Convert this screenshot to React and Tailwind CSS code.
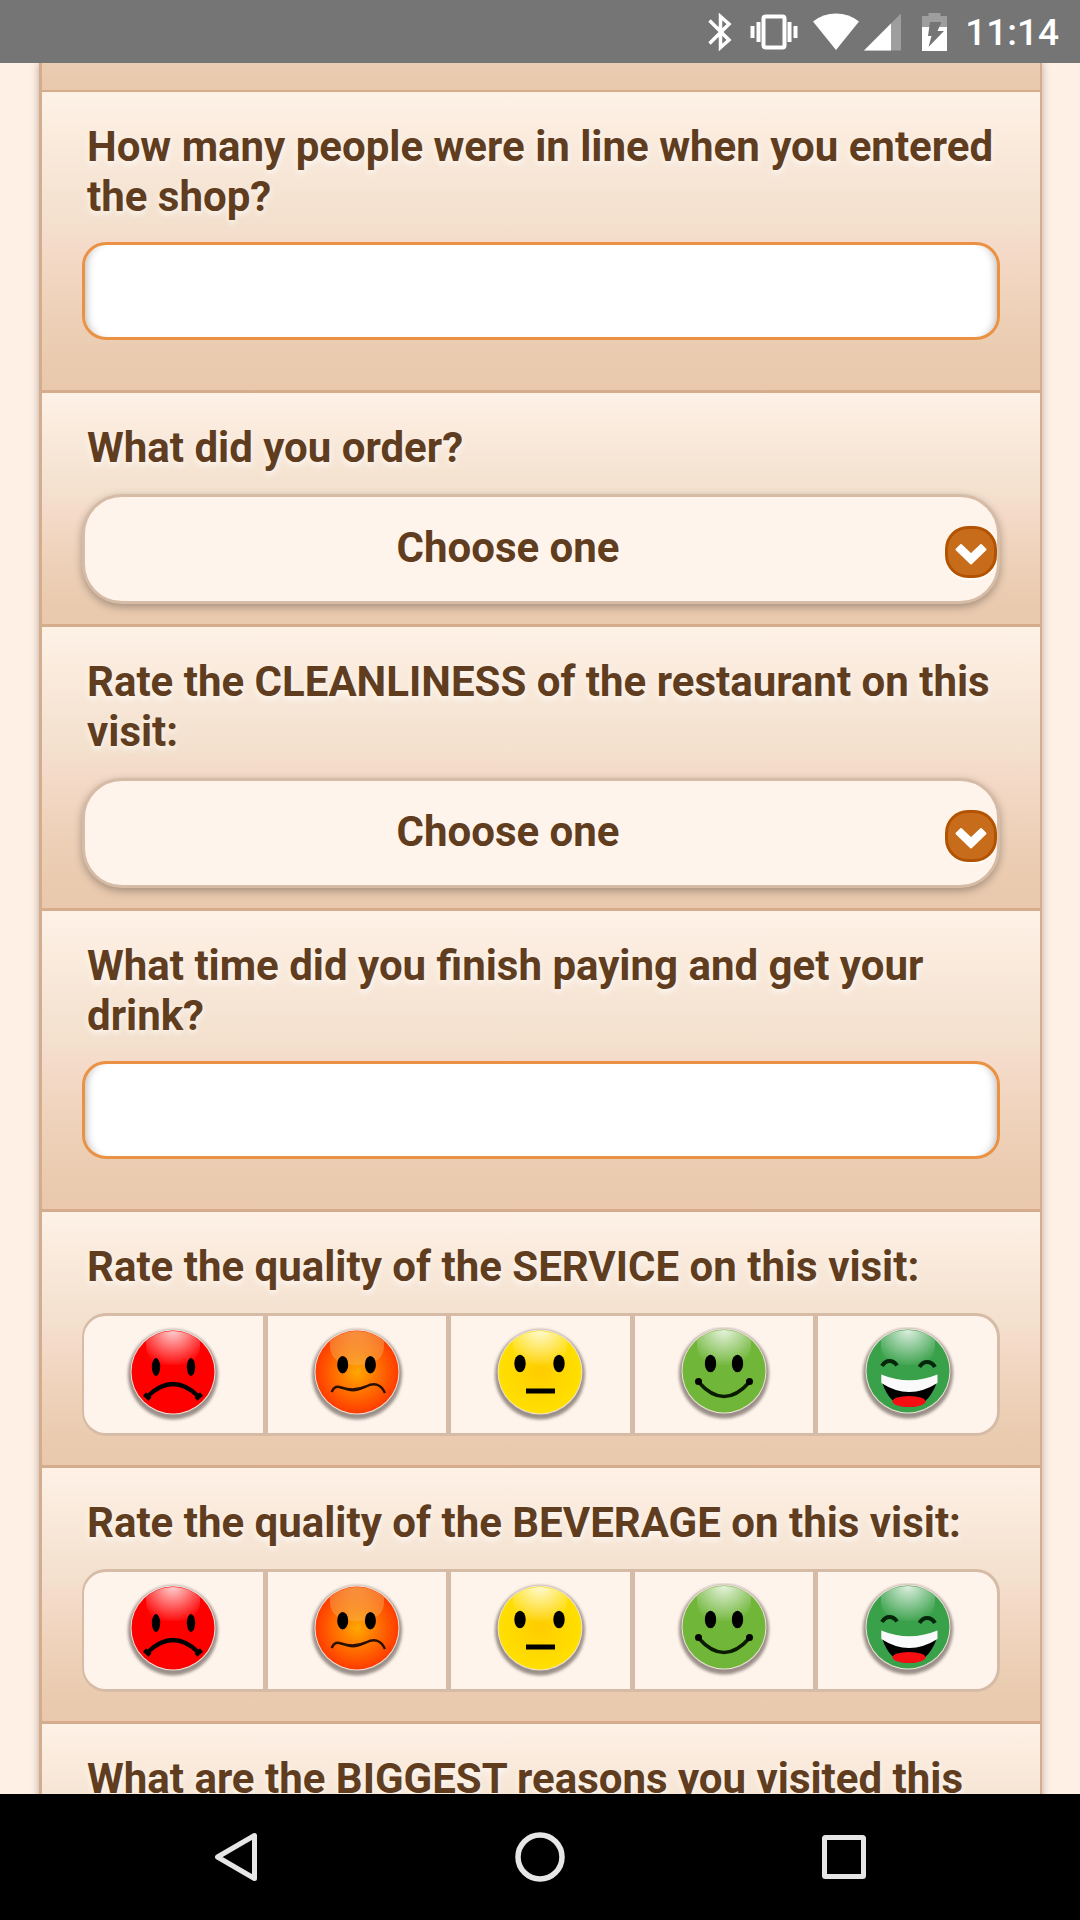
import React, { useId, useState } from 'react';

const QUESTION_TEXT =
  'block px-[5px] text-[42px] leading-[50px] font-bold text-[#5f3d1e] [text-shadow:0_3px_6px_rgba(255,255,255,0.8)]';

const faces = [
  { id: 'terrible', label: 'Terrible', inner: '#ff0000', outer: '#ff0000', cy: 45 },
  { id: 'poor', label: 'Poor', inner: '#ffa800', outer: '#ff3c00', cy: 45 },
  { id: 'average', label: 'Average', inner: '#ffcc00', outer: '#ffe000', cy: 45 },
  { id: 'good', label: 'Good', inner: '#70b639', outer: '#70b639', cy: 44 },
  { id: 'excellent', label: 'Excellent', inner: '#3aa14b', outer: '#3aa14b', cy: 44 },
];

const features = {
  terrible: (
    <>
      <ellipse cx="31" cy="40" rx="4.2" ry="9" />
      <ellipse cx="66" cy="40" rx="4.2" ry="9" />
      <path
        d="M23 69 Q48 45 73 69 M19.5 67 L25 72 M71 72 L76.5 67"
        fill="none"
        stroke="#000"
        strokeWidth="4.5"
      />
    </>
  ),
  poor: (
    <>
      <ellipse cx="33.7" cy="37.7" rx="5.5" ry="8.7" />
      <ellipse cx="61.4" cy="37.7" rx="5.5" ry="8.7" />
      <path
        d="M22.7 65 Q25 58 32 60.5 Q45 65 57 59.5 Q70 53 76 66"
        fill="none"
        stroke="#2a1000"
        strokeWidth="2.5"
      />
      <path d="M32 60.5 Q46 64 58 59 Q46 69 32 60.5Z" fill="#2a1000" />
    </>
  ),
  average: (
    <>
      <ellipse cx="28" cy="36.5" rx="5.7" ry="8.7" />
      <ellipse cx="67" cy="36.5" rx="5.7" ry="8.7" />
      <path d="M34 64 H63" fill="none" stroke="#000" strokeWidth="5" />
    </>
  ),
  good: (
    <>
      <ellipse cx="34.5" cy="36.5" rx="5.7" ry="8.7" />
      <ellipse cx="61.5" cy="36.5" rx="5.7" ry="8.7" />
      <path d="M22.5 55 Q48 84 73.5 55" fill="none" stroke="#0c1c02" strokeWidth="3.5" />
      <circle cx="22.5" cy="54.5" r="3.5" />
      <circle cx="73.5" cy="54.5" r="3.5" />
    </>
  ),
  excellent: (
    <>
      <path
        d="M22 39 Q25 34 29.5 34 Q34 34 37 38.5 M59.500 40 Q62.5 35 67 35 Q72 35 75 40"
        fill="none"
        stroke="#06260c"
        strokeWidth="4"
      />
      <path d="M22 55 Q49 74 77 55 Q68 80 49.5 80 Q30 80 22 55Z" />
      <ellipse cx="49" cy="74.5" rx="16.5" ry="5.5" fill="#f50f12" />
      <path d="M21.3 47.5 Q49 59 77.5 47.5 V56 Q49 74 21.3 56Z" fill="#fafafa" />
    </>
  ),
};

const Face = ({ face }) => {
  const uid = useId();
  const { cy } = face;
  // orange keeps a flat, darker highlight than the others
  const isFlat = face.id === 'poor';
  const gloss = isFlat ? '#f5b45a' : '#ffffff';

  return (
    <svg viewBox="0 0 96 96" className="h-24 w-24" aria-hidden="true">
      <defs>
        <radialGradient id={`${uid}-body`}>
          <stop offset="0%" stopColor={face.inner} />
          <stop offset="100%" stopColor={face.outer} />
        </radialGradient>
        <radialGradient id={`${uid}-gloss`} gradientUnits="userSpaceOnUse" cx="48" cy="2" r="36">
          <stop offset="0%" stopColor={gloss} stopOpacity={isFlat ? 0.7 : 0.85} />
          <stop offset="100%" stopColor={gloss} stopOpacity={isFlat ? 0.4 : 0.05} />
        </radialGradient>
        <clipPath id={`${uid}-clip`}>
          <circle cx="48" cy={cy} r="41" />
        </clipPath>
        <filter id={`${uid}-blur`} x="-20%" y="-20%" width="140%" height="140%">
          <feGaussianBlur stdDeviation="1.7" />
        </filter>
      </defs>
      <circle cx="48" cy={cy + 2.5} r="45" fill="#6f6560" opacity="0.7" filter={`url(#${uid}-blur)`} />
      <circle cx="48" cy={cy} r="42.5" fill="#f0e2d8" />
      <circle cx="48" cy={cy} r="41.5" fill={`url(#${uid}-body)`} />
      <path
        d="M21 -4 H75 V20 Q74 38 48 38 Q22 38 21 20Z"
        fill={`url(#${uid}-gloss)`}
        clipPath={`url(#${uid}-clip)`}
      />
      {features[face.id]}
    </svg>
  );
};

const Section = ({ children, className = '' }) => (
  <section
    className={`shrink-0 border-b-3 border-[#d6ad8c] bg-[linear-gradient(#fef1e6_0%,#f3e0cd_44%,#f5dbca_50%,#eccfb5_78%,#e9c8ac_100%)] px-10 pt-[30px] ${className}`}
  >
    {children}
  </section>
);

const TextQuestion = ({ label }) => {
  const id = useId();
  const [value, setValue] = useState('');

  return (
    <Section className="pb-[50px]">
      <label htmlFor={id} className={QUESTION_TEXT}>
        {label}
      </label>
      <input
        id={id}
        type="text"
        value={value}
        onChange={(e) => setValue(e.target.value)}
        className="mt-5 block h-[98px] w-full rounded-[24px] border-3 border-[#ea9143] bg-white px-5 text-[42px] text-[#5f3d1e] shadow-[inset_9px_0_9px_-8px_rgba(0,0,0,0.3),inset_-9px_0_9px_-8px_rgba(0,0,0,0.3)] outline-none"
      />
    </Section>
  );
};

const SelectQuestion = ({ label, options }) => {
  const id = useId();
  const [value, setValue] = useState('');

  return (
    <Section className="pb-5">
      <label htmlFor={id} className={QUESTION_TEXT}>
        {label}
      </label>
      <div className="relative mt-[21px]">
        <select
          id={id}
          value={value}
          onChange={(e) => setValue(e.target.value)}
          className="block h-[110px] w-full appearance-none rounded-[40px] border-3 border-[#d6bca6] bg-[#fff4eb] pr-[82px] pb-1 pl-4 text-[42px] font-bold text-[#5f3d1e] shadow-[0_3px_8px_rgba(0,0,0,0.3)] outline-none [text-align-last:center]"
        >
          <option value="">Choose one</option>
          {options.map((option) => (
            <option key={option}>{option}</option>
          ))}
        </select>
        <span className="pointer-events-none absolute top-8 right-[3px] flex h-[52px] w-[52px] items-center justify-center rounded-[23px] border-3 border-[#b35300] bg-[#c66c1b] pt-1 shadow-[0_2px_2px_rgba(255,255,255,0.8)]">
          <svg viewBox="0 0 32 22" className="h-[22px] w-8" fill="#fff" stroke="#fff" strokeWidth="2">
            <path d="M6 2 L16 11.500 L26 2 L30.500 6.500 L16 20.500 L1.500 6.500Z" strokeLinejoin="round" />
          </svg>
        </span>
      </div>
    </Section>
  );
};

const FaceQuestion = ({ label }) => {
  const name = useId();
  const [value, setValue] = useState('');

  return (
    <Section className="pb-[29px]">
      <fieldset className="min-w-0">
        <legend className={QUESTION_TEXT}>{label}</legend>
        <div className="mt-[21px] grid grid-cols-5">
          {faces.map((face) => (
            <label
              key={face.id}
              className="flex h-[123px] cursor-pointer items-center justify-center border-y-3 border-r-3 border-l-2 border-[#d6bca6] bg-[#fff4eb] first:rounded-l-[24px] last:rounded-r-[24px] has-checked:bg-[#f6c99a]"
            >
              <input
                type="radio"
                name={name}
                value={face.id}
                aria-label={face.label}
                checked={value === face.id}
                onChange={() => setValue(face.id)}
                className="sr-only"
              />
              <Face face={face} />
            </label>
          ))}
        </div>
      </fieldset>
    </Section>
  );
};

const StatusBar = () => (
  <header className="flex h-[63px] shrink-0 items-center justify-end bg-[#757575] pr-[21px] text-white">
    {/* Bluetooth */}
    <svg viewBox="0 0 24 38" className="mr-[18px] h-[38px] w-6" fill="none" stroke="#fff" strokeWidth="3.5">
      <path d="M1.5 7.5 L21 27 L12.5 34.5 V3.5 L21 11 L1.5 30.500" />
    </svg>
    {/* Vibrate */}
    <svg viewBox="0 0 48 38" className="mr-[15px] h-[38px] w-12" fill="#fff">
      <rect x="13.5" y="3.5" width="21" height="31" rx="2" fill="none" stroke="#fff" strokeWidth="4" />
      <rect x="0.5" y="13" width="4" height="12" />
      <rect x="6.5" y="9" width="4" height="20" />
      <rect x="37.5" y="9" width="4" height="20" />
      <rect x="43.5" y="13" width="4" height="12" />
    </svg>
    {/* Wi-Fi */}
    <svg viewBox="0 0 46 38" className="mr-[5px] h-[38px] w-[46px]" fill="#fff">
      <path d="M0 8.5 Q10 0.5 23 0.5 Q36 0.5 46 8.5 L23 37Z" />
    </svg>
    {/* Cell signal */}
    <svg viewBox="0 0 37 38" className="mr-[21px] h-[38px] w-[37px]" fill="#fff">
      <path d="M37 0.5 V37.5 H0Z" opacity="0.3" />
      <path d="M27 10.5 V37.5 H0Z" />
    </svg>
    {/* Battery, charging */}
    <svg viewBox="0 0 25 38" className="mr-[18px] h-[38px] w-[25px]" fill="#fff">
      <path d="M0 3 H6.5 V0 H18.5 V3 H25 V14 H0Z" opacity="0.3" />
      <path d="M0 14 H25 V38 H0Z" />
      <path d="M8 9 H19.5 L15.5 18 H22 L6.5 34 L9.5 23 H6Z" fill="#757575" />
    </svg>
    <time className="pt-0.5 text-[37px] leading-none font-medium">11:14</time>
  </header>
);

const NavBar = () => (
  <nav className="grid h-[126px] shrink-0 grid-cols-3 items-center justify-items-center bg-black px-[84px]">
    <button type="button" aria-label="Back">
      <svg viewBox="0 0 50 50" className="h-[50px] w-[50px]" fill="none" stroke="#e6e6e6" strokeWidth="5">
        <path d="M43.5 3.5 V46.5 L6.5 25Z" strokeLinejoin="round" />
      </svg>
    </button>
    <button type="button" aria-label="Home">
      <svg viewBox="0 0 50 50" className="h-[50px] w-[50px]" fill="none" stroke="#e6e6e6" strokeWidth="5.5">
        <circle cx="25" cy="25" r="22" />
      </svg>
    </button>
    <button type="button" aria-label="Recent apps">
      <svg viewBox="0 0 50 50" className="h-[50px] w-[50px]" fill="none" stroke="#e6e6e6" strokeWidth="5">
        <rect x="5.5" y="5.5" width="39" height="39" rx="1" />
      </svg>
    </button>
  </nav>
);

const App = () => (
  <div className="flex h-screen flex-col bg-[#fff0e5] font-[Roboto,sans-serif]">
    <StatusBar />

    <main className="min-h-0 flex-1 overflow-hidden">
      <form className="mr-[38px] ml-[39px] flex flex-col border-r-2 border-l-3 border-[#d6ad8c] shadow-[0_0_8px_rgba(0,0,0,0.3)]">
        {/* Tail end of the previous question */}
        <div className="h-[29px] border-b-2 border-[#d6ad8c] bg-[linear-gradient(#ebcdb3,#e9c8ac)]" />

        <TextQuestion label="How many people were in line when you entered the shop?" />
        <SelectQuestion label="What did you order?" options={['Coffee', 'Tea', 'Smoothie', 'Other']} />
        <SelectQuestion
          label="Rate the CLEANLINESS of the restaurant on this visit:"
          options={['Excellent', 'Good', 'Average', 'Poor', 'Terrible']}
        />
        <TextQuestion label="What time did you finish paying and get your drink?" />
        <FaceQuestion label="Rate the quality of the SERVICE on this visit:" />
        <FaceQuestion label="Rate the quality of the BEVERAGE on this visit:" />

        <Section className="pb-[150px]">
          <h2 className={QUESTION_TEXT}>What are the BIGGEST reasons you visited this</h2>
        </Section>
      </form>
    </main>

    <NavBar />
  </div>
);

export default App;
